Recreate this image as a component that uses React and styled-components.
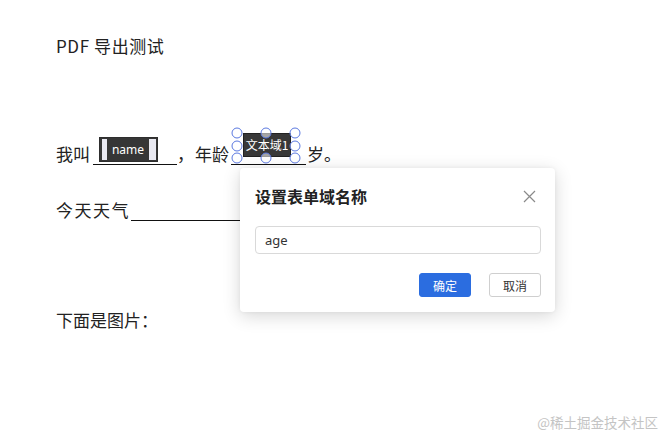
import React from "react";
import styled, { createGlobalStyle } from "styled-components";

const Global = createGlobalStyle`
  html, body { margin: 0; padding: 0; background: #fff; }
  body { width: 666px; height: 436px; overflow: hidden; position: relative;
    font-family: "Noto Sans CJK SC", "Noto Sans", sans-serif; color: #222; }
`;

const Page = styled.div`
  position: relative;
  width: 666px;
  height: 436px;
  padding: 34px 0 0 56px;
  box-sizing: border-box;
`;

const Title = styled.div`
  font-size: 17px;
  line-height: 24px;
  height: 24px;
  color: #222;
  letter-spacing: 0.6px;
`;

const Row = styled.div`
  display: flex;
  align-items: stretch;
  height: 28px;
  margin-top: ${(p) => p.$gap}px;
  font-size: 17px;
  color: #222;
`;

const Txt = styled.span`
  display: block;
  padding-top: 6px;
  line-height: 22px;
  white-space: nowrap;
  letter-spacing: ${(p) => p.$ls || 0}px;
  margin-left: ${(p) => p.$ml || 0}px;
`;

const Blank = styled.span`
  position: relative;
  display: block;
  width: ${(p) => p.$w}px;
  margin-left: ${(p) => p.$ml || 0}px;
  border-bottom: 1px solid #111;
  box-sizing: border-box;
`;

const NameField = styled.div`
  position: absolute;
  left: 6px;
  top: 0;
  width: 59px;
  height: 25px;
  box-sizing: border-box;
  border: 1px solid #2e2e2e;
  display: grid;
  grid-template-columns: 7px 1fr 8px;
  background: #363636;
`;

const Strip = styled.div`
  background: #e9e9f1;
  margin: ${(p) => (p.$left ? "1px 0 1px 2px" : "1px 1px 1px 0")};
`;

const FieldLabel = styled.div`
  color: #fff;
  font-size: 12px;
  line-height: 23px;
  text-align: center;
  font-family: "Noto Sans", "Noto Sans CJK SC", sans-serif;
  white-space: nowrap;
`;

const AgeField = styled.div`
  position: absolute;
  left: 12px;
  top: -4px;
  width: 48px;
  height: 24px;
  box-sizing: border-box;
  border: 1px solid #222;
  background: #383838;
  color: #fff;
  font-size: 12px;
  line-height: 22px;
  text-align: center;
  white-space: nowrap;
`;

const Handle = styled.span`
  position: absolute;
  width: 9px;
  height: 9px;
  border-radius: 50%;
  border: 1px solid #5a78e0;
  background: rgba(255, 255, 255, 0.55);
  transform: translate(-50%, -50%);
`;

const Dialog = styled.div`
  position: absolute;
  left: 240px;
  top: 168px;
  width: 315px;
  height: 144px;
  box-sizing: border-box;
  background: #fff;
  border-radius: 4px;
  box-shadow: 0 4px 18px rgba(0, 0, 0, 0.16), 0 0 4px rgba(0, 0, 0, 0.05);
  padding: 17px 14px 15px 15px;
  display: flex;
  flex-direction: column;
`;

const DialogHeader = styled.div`
  display: flex;
  align-items: center;
  justify-content: space-between;
  height: 22px;
`;

const DialogTitle = styled.div`
  font-size: 16px;
  font-weight: 700;
  color: #222;
  line-height: 22px;
`;

const Close = styled.button`
  border: 0;
  background: none;
  padding: 0;
  margin-right: 5px;
  width: 14px;
  height: 14px;
  display: flex;
  align-items: center;
  justify-content: center;
  cursor: pointer;
`;

const Input = styled.input`
  margin-top: 19px;
  height: 28px;
  box-sizing: border-box;
  border: 1px solid #d9d9d9;
  border-radius: 4px;
  padding: 0 9px;
  font-size: 13px;
  color: #333;
  font-family: "Noto Sans", "Noto Sans CJK SC", sans-serif;
  outline: none;
`;

const Footer = styled.div`
  margin-top: 19px;
  display: flex;
  justify-content: flex-end;
  gap: 18px;
`;

const Btn = styled.button`
  width: 52px;
  height: 24px;
  box-sizing: border-box;
  border-radius: 3px;
  font-size: 12px;
  font-family: "Noto Sans CJK SC", sans-serif;
  padding: 0;
  cursor: pointer;
  border: 1px solid ${(p) => (p.$primary ? "#2b6de0" : "#cfcfcf")};
  background: ${(p) => (p.$primary ? "#2b6de0" : "#fff")};
  color: ${(p) => (p.$primary ? "#fff" : "#333")};
`;

const Watermark = styled.div`
  position: absolute;
  right: 8px;
  bottom: 5px;
  font-size: 13.5px;
  color: #c4c4c4;
  line-height: 18px;
`;

const handles = [
  [6, -4], [35, -4], [64, -4],
  [6, 9], [64, 9],
  [6, 21], [35, 21], [64, 21],
];

export default function App() {
  return (
    <>
      <Global />
      <Page>
        <Title>PDF 导出测试</Title>
        <Row $gap={79}>
          <Txt>我叫</Txt>
          <Blank $w={84} $ml={3}>
            <NameField>
              <Strip $left />
              <FieldLabel>name</FieldLabel>
              <Strip />
            </NameField>
          </Blank>
          <Txt>，</Txt>
          <Txt $ml={1}>年龄</Txt>
          <Blank $w={75} $ml={2}>
            <AgeField>文本域1</AgeField>
            {handles.map(([x, y], i) => (
              <Handle key={i} style={{ left: x, top: y }} />
            ))}
          </Blank>
          <Txt $ml={1}>岁。</Txt>
        </Row>
        <Row $gap={28}>
          <Txt $ls={1.5}>今天天气</Txt>
          <Blank $w={120} $ml={1} />
        </Row>
        <Row $gap={82}>
          <Txt>下面是图片：</Txt>
        </Row>
        <Dialog>
          <DialogHeader>
            <DialogTitle>设置表单域名称</DialogTitle>
            <Close aria-label="关闭">
              <svg width="13" height="13" viewBox="0 0 13 13">
                <path d="M1 1L12 12M12 1L1 12" stroke="#8a8a8a" strokeWidth="1.2" fill="none" />
              </svg>
            </Close>
          </DialogHeader>
          <Input defaultValue="age" />
          <Footer>
            <Btn $primary>确定</Btn>
            <Btn>取消</Btn>
          </Footer>
        </Dialog>
        <Watermark>@稀土掘金技术社区</Watermark>
      </Page>
    </>
  );
}
